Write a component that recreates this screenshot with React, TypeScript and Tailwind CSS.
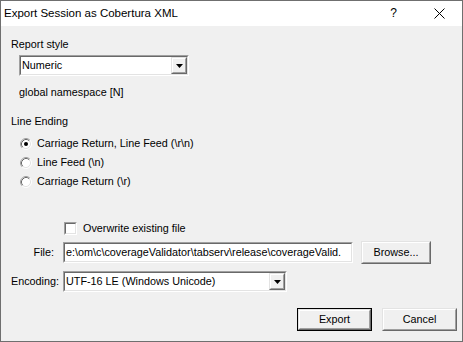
import React from "react";

type BoxProps = { className?: string; children?: React.ReactNode };

// classic sunken 3D edge (edit, combo, checkbox)
const Sunken: React.FC<BoxProps> = ({ className = "", children }) => (
  <div className={`border border-t-[#a0a0a0] border-l-[#a0a0a0] border-b-white border-r-white ${className}`}>
    <div className="h-full flex items-center bg-white border border-t-[#696969] border-l-[#696969] border-b-[#e3e3e3] border-r-[#e3e3e3]">
      {children}
    </div>
  </div>
);

// classic raised 3D edge (buttons)
const Raised: React.FC<BoxProps> = ({ className = "", children }) => (
  <div className={`border border-t-[#e3e3e3] border-l-[#e3e3e3] border-b-[#696969] border-r-[#696969] ${className}`}>
    <div className="h-full flex items-center justify-center bg-[#f0f0f0] border border-t-white border-l-white border-b-[#a0a0a0] border-r-[#a0a0a0]">
      {children}
    </div>
  </div>
);

const ComboBox: React.FC<{ value: string; className?: string }> = ({ value, className = "" }) => (
  <Sunken className={`h-[21px] ${className}`}>
    <span className="flex-1 pl-[1px] whitespace-nowrap overflow-hidden">{value}</span>
    <Raised className="w-[16px] h-full">
      <svg width="7" height="4" viewBox="0 0 7 4">
        <path d="M0 0h7L3.5 4z" fill="#000" />
      </svg>
    </Raised>
  </Sunken>
);

const Radio: React.FC<{ checked?: boolean; label: string }> = ({ checked, label }) => (
  <div className="flex items-center h-[19px]">
    <svg width="12" height="12" viewBox="0 0 12 12" className="ml-[9px] shrink-0">
      <circle cx="6" cy="6" r="5" fill="#fff" />
      <path d="M2.11 9.89A5.5 5.5 0 0 1 9.89 2.11" fill="none" stroke="#a0a0a0" />
      <path d="M9.89 2.11A5.5 5.5 0 0 1 2.11 9.89" fill="none" stroke="#fff" />
      <path d="M2.82 9.18A4.5 4.5 0 0 1 9.18 2.82" fill="none" stroke="#696969" />
      <path d="M9.18 2.82A4.5 4.5 0 0 1 2.82 9.18" fill="none" stroke="#e3e3e3" />
      {checked && <circle cx="6" cy="6" r="2" fill="#000" />}
    </svg>
    <span className="ml-[5px] whitespace-nowrap">{label}</span>
  </div>
);

export default function App() {
  return (
    <div className="w-[463px] h-[342px] flex flex-col border border-[#6f6f6f] bg-[#f0f0f0] text-black text-[10.8px] leading-[13px] font-['Liberation_Sans',Arial,sans-serif]">
      {/* title bar */}
      <div className="h-[25px] shrink-0 bg-white flex items-center">
        <span className="ml-[3px] text-[11.5px] whitespace-nowrap">Export Session as Cobertura XML</span>
        <span className="ml-auto mr-[37px] text-[12px]">?</span>
        <svg width="11" height="11" viewBox="0 0 11 11" className="mr-[17px]">
          <path d="M0.5 0.5l10 10M10.5 0.5l-10 10" stroke="#000" strokeWidth="1" />
        </svg>
      </div>

      {/* body */}
      <div className="flex-1 flex flex-col pl-[10px] pr-[5px]">
        <div className="mt-[12px]">Report style</div>
        <ComboBox value="Numeric" className="mt-[4px] ml-[8px] w-[170px]" />
        <div className="mt-[10px] ml-[8px]">global namespace [N]</div>

        <div className="mt-[16px]">Line Ending</div>
        <div className="mt-[6px] flex flex-col">
          <Radio checked label="Carriage Return, Line Feed (\r\n)" />
          <Radio label="Line Feed (\n)" />
          <Radio label="Carriage Return (\r)" />
        </div>

        <div className="mt-[28px] flex items-center h-[19px] ml-[53px]">
          <Sunken className="w-[13px] h-[13px]" />
          <span className="ml-[6px]">Overwrite existing file</span>
        </div>

        <div className="mt-[3px] flex items-center h-[23px]">
          <span className="w-[43px] text-right">File:</span>
          <Sunken className="ml-[9px] w-[290px] h-[21px]">
            <span className="pl-[1px] whitespace-nowrap overflow-hidden">
              e:\om\c\coverageValidator\tabserv\release\coverageValid.
            </span>
          </Sunken>
          <Raised className="ml-[8px] w-[70px] h-[23px]">Browse...</Raised>
        </div>

        <div className="mt-[7px] flex items-center h-[21px]">
          <span className="w-[52px]">Encoding:</span>
          <ComboBox value="UTF-16 LE (Windows Unicode)" className="w-[224px]" />
        </div>

        <div className="mt-[16px] flex justify-end gap-[10px]">
          <div className="border border-black">
            <Raised className="w-[73px] h-[21px]">Export</Raised>
          </div>
          <Raised className="w-[75px] h-[23px]">Cancel</Raised>
        </div>
      </div>
    </div>
  );
}
